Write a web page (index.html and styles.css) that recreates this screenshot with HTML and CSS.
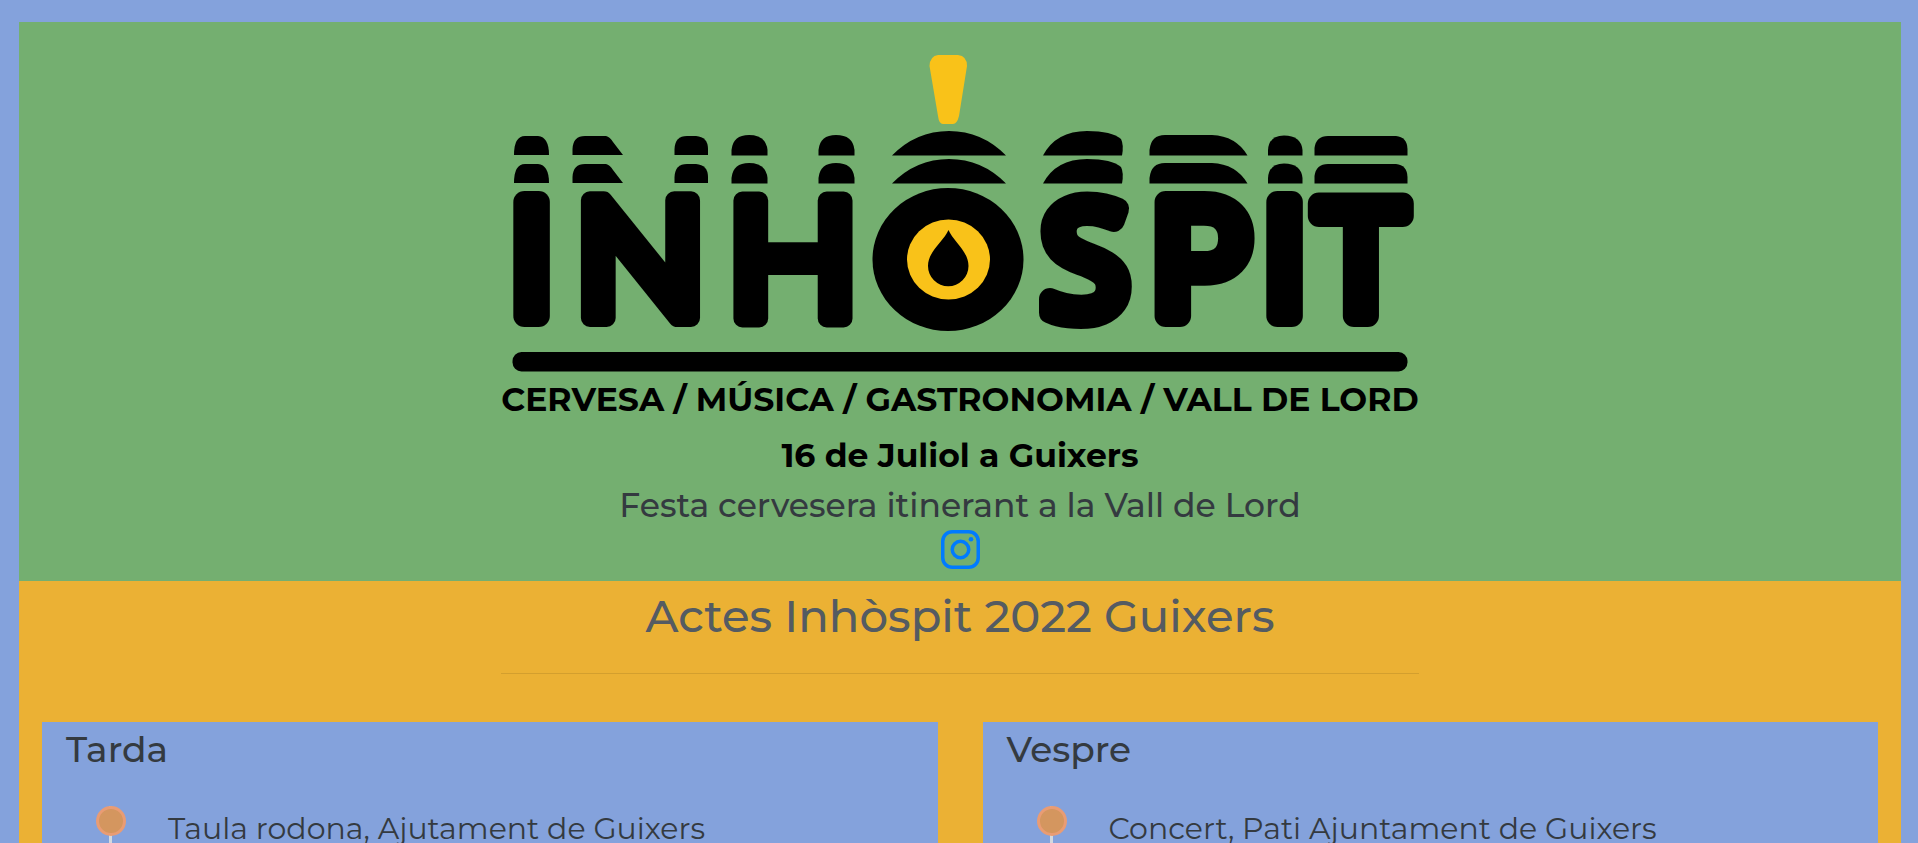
FILE: index.html
```html
<!DOCTYPE html>
<html lang="ca">
<head>
<meta charset="utf-8">
<title>Inhòspit</title>
<link rel="stylesheet" href="styles.css">
</head>
<body>
<div class="page">
  <header class="hero">
    <svg class="logo" viewBox="501 40 918 340" role="img" aria-label="Inhòspit">
      <path class="amber" d="M938 55H958Q967 56 967 66L959 116Q957 124 953 124H943Q939 124 938 116L929.500 66Q930 56 938 55Z"/>
      <g id="echo">
        <path d="M514 155Q514 136 525 136H538Q549 137 549 155Z"/>
        <path d="M572.500 155V149Q573 136 585 136H606Q610 137 613 142L623 155Z"/>
        <path d="M674.500 155V149Q675 136 687 136H696Q708 137 708 149V155Z"/>
        <path d="M731.500 155.500V150Q733 135 749 135Q766 135 767.500 150V155.500Z"/>
        <path d="M818.500 155.500V150Q820 135 836 135Q853 135 854.500 150V155.500Z"/>
        <path d="M892 155.500Q916 131 949 131Q982 131 1006 155.500Z"/>
        <path d="M1043 155.500Q1056 131 1087 131Q1112 131 1121 139Q1124 145 1122 155.500Z"/>
        <path d="M1149.500 155.500V150Q1151 135 1165 135H1212Q1236 136 1247.500 155.500Z"/>
        <path d="M1268 155.500V150Q1269 135.500 1284 135.500Q1301 135.500 1302.500 150V155.500Z"/>
        <path d="M1314.500 155.500V148Q1316 136 1328 136H1396Q1407 137 1407.500 149V155.500Z"/>
      </g>
      <use href="#echo" y="28"/>
      <ellipse cx="948" cy="259.500" rx="75.500" ry="71.500"/>
      <text class="wordmark" x="531.500 640.500 793 948 1085 1202 1284.500 1361" y="316 318 318 316 316 316 316 316">I<tspan class="wide">NH</tspan>O<tspan class="slim">S</tspan>PI<tspan class="slim">T</tspan></text>
      <ellipse class="amber" cx="948.500" cy="259.500" rx="41.500" ry="40"/>
      <path d="M948.500 230C953 241 968.500 251 968.500 266A20 20 0 0 1 928 266C928 251 944 241 948.500 230Z"/>
      <rect x="512.500" y="352" width="895" height="19.500" rx="9"/>
    </svg>
    <h1 class="tagline">CERVESA / MÚSICA / GASTRONOMIA / VALL DE LORD</h1>
    <p class="date">16 de Juliol a Guixers</p>
    <p class="lead">Festa cervesera itinerant a la Vall de Lord</p>
    <a class="social" href="#" aria-label="Instagram">
      <svg viewBox="0 0 39 39" fill="none" stroke="currentColor" stroke-width="3.500">
        <rect x="1.750" y="1.750" width="35.500" height="35.500" rx="9.500"/>
        <circle cx="19.500" cy="19.500" r="8.250"/>
        <circle cx="30" cy="9.200" r="2.300" fill="currentColor" stroke="none"/>
      </svg>
    </a>
  </header>
  <main class="program">
    <h2 class="program-title">Actes Inhòspit 2022 Guixers</h2>
    <hr class="rule">
    <div class="cards">
      <section class="card">
        <h3 class="card-title">Tarda</h3>
        <ul class="timeline">
          <li class="event">Taula rodona, Ajutament de Guixers</li>
        </ul>
      </section>
      <section class="card">
        <h3 class="card-title">Vespre</h3>
        <ul class="timeline">
          <li class="event">Concert, Pati Ajuntament de Guixers</li>
        </ul>
      </section>
    </div>
  </main>
</div>
</body>
</html>
```
FILE: styles.css
```css
*,
*::before,
*::after { box-sizing: border-box; }

body {
  margin: 0;
  background: #84a2dc;
  color: #343a40;
  font-family: Montserrat, Inter, "Open Sans", sans-serif;
}

.page {
  height: 100vh;
  padding: 22px 17px 0 19px;
  overflow-y: auto;
  scrollbar-width: none;
}

.hero {
  display: flex;
  flex-direction: column;
  align-items: center;
  padding: 18px 16px 12px;
  background: #74af70;
  text-align: center;
}

.logo {
  display: block;
  width: 100%;
  max-width: 918px;
}

.amber { fill: #f9c219; }

.wordmark {
  font-family: Inter, sans-serif;
  font-size: 157px;
  text-anchor: middle;
  stroke: #000;
  stroke-width: 22px;
  stroke-linejoin: round;
}

.wide {
  font-family: Montserrat, Inter, sans-serif;
  font-size: 168px;
  font-weight: 500;
  stroke-width: 18px;
}

.slim { font-family: "Noto Sans", sans-serif; }

.tagline,
.date,
.lead {
  margin: 0;
  font-size: 33px;
  line-height: 38px;
}

.tagline,
.date {
  color: #000;
  font-weight: 700;
}

.tagline { margin-bottom: 18px; }

.date { margin-bottom: 12px; }

.lead {
  margin-bottom: 6px;
  font-weight: 500;
}

.social {
  display: block;
  width: 39px;
  height: 39px;
  color: #007bff;
}

.social svg { display: block; }

.program {
  display: flex;
  flex-direction: column;
  min-height: 262px;
  padding: 7px 23px 0;
  background: #ebb134;
}

.program-title {
  margin: 0;
  color: #545b62;
  font-size: 45px;
  font-weight: 500;
  line-height: 56px;
  text-align: center;
}

.rule {
  width: 100%;
  max-width: 918px;
  margin: 29px auto 48px;
  border: 0;
  border-top: 1px solid rgba(0, 0, 0, 0.1);
}

.cards {
  display: grid;
  grid-template-columns: 1fr 1fr;
  gap: 45px;
}

.card {
  padding: 7px 24px 24px;
  background: #84a2dc;
}

.card-title {
  margin: 0;
  font-size: 36px;
  font-weight: 500;
  line-height: 40px;
}

.timeline {
  margin: 37px 0 0;
  padding: 0;
  list-style: none;
}

.event {
  position: relative;
  padding: 5px 0 24px 102px;
  font-size: 30px;
  font-weight: 400;
  line-height: 36px;
}

.event::before {
  content: "";
  position: absolute;
  top: 0;
  bottom: 0;
  left: 43px;
  width: 3px;
  background: #d4d9df;
}

.event::after {
  content: "";
  position: absolute;
  top: 0;
  left: 30px;
  width: 30px;
  height: 30px;
  border: 3px solid #e99c74;
  border-radius: 50%;
  background: #d4965f;
}
```
